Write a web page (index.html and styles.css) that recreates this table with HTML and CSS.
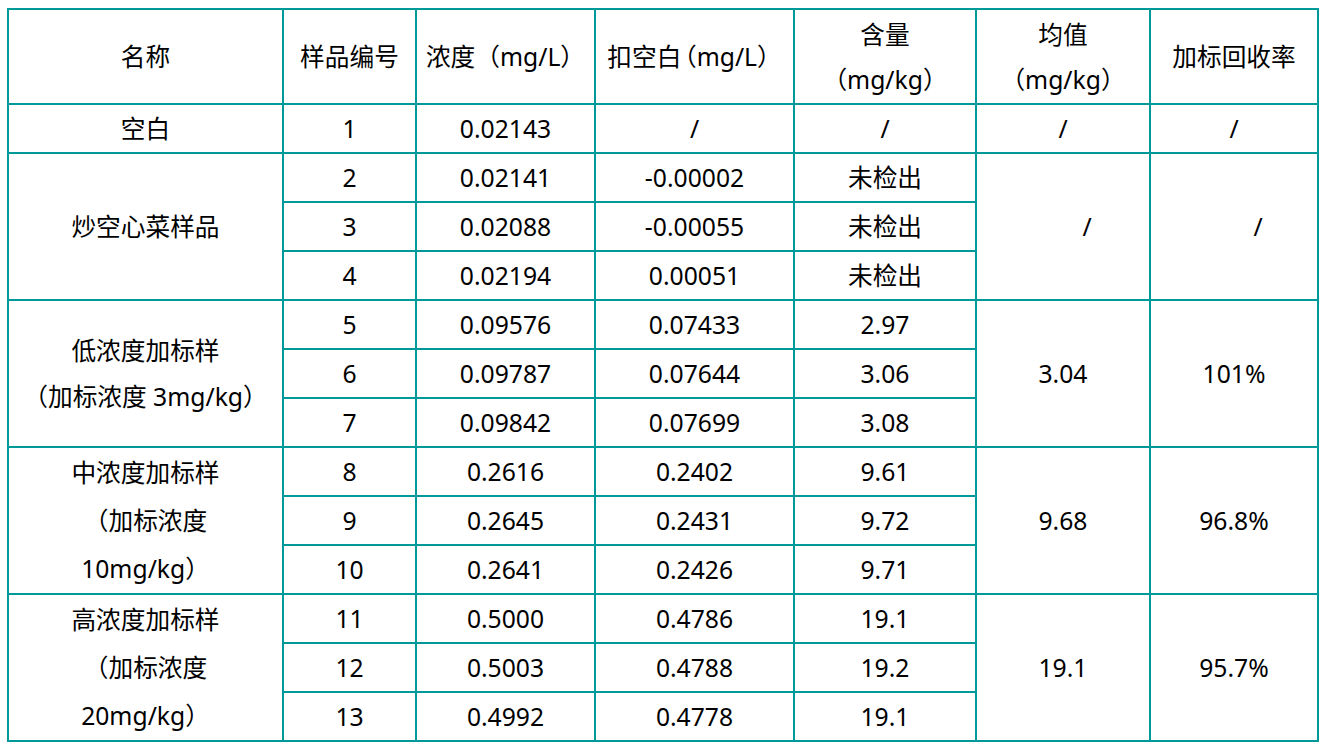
FILE: index.html
```html
<!DOCTYPE html>
<html lang="zh">
<head>
<meta charset="utf-8">
<title>加标回收率</title>
<link rel="stylesheet" href="styles.css">
</head>
<body>
<table class="data">
  <colgroup>
    <col class="c1"><col class="c2"><col class="c3"><col class="c4"><col class="c5"><col class="c6"><col class="c7">
  </colgroup>
  <thead>
    <tr class="head">
      <th>名称</th>
      <th>样品编号</th>
      <th>浓度（mg/L）</th>
      <th>扣空白<span class="tight">（</span>mg/L）</th>
      <th>含量<br>（mg/kg）</th>
      <th>均值<br>（mg/kg）</th>
      <th>加标回收率</th>
    </tr>
  </thead>
  <tbody>
    <tr>
      <td>空白</td><td>1</td><td>0.02143</td><td>/</td><td>/</td><td>/</td><td>/</td>
    </tr>
    <tr>
      <td rowspan="3">炒空心菜样品</td><td>2</td><td>0.02141</td><td>-0.00002</td><td>未检出</td>
      <td rowspan="3" class="indent">/</td><td rowspan="3" class="indent">/</td>
    </tr>
    <tr><td>3</td><td>0.02088</td><td>-0.00055</td><td>未检出</td></tr>
    <tr><td>4</td><td>0.02194</td><td>0.00051</td><td>未检出</td></tr>
    <tr>
      <td rowspan="3" class="two">低浓度加标样<br>（加标浓度 3mg/kg）</td><td>5</td><td>0.09576</td><td>0.07433</td><td>2.97</td>
      <td rowspan="3">3.04</td><td rowspan="3">101%</td>
    </tr>
    <tr><td>6</td><td>0.09787</td><td>0.07644</td><td>3.06</td></tr>
    <tr><td>7</td><td>0.09842</td><td>0.07699</td><td>3.08</td></tr>
    <tr>
      <td rowspan="3" class="three">中浓度加标样<br>（加标浓度<br>10mg/kg）</td><td>8</td><td>0.2616</td><td>0.2402</td><td>9.61</td>
      <td rowspan="3">9.68</td><td rowspan="3">96.8%</td>
    </tr>
    <tr><td>9</td><td>0.2645</td><td>0.2431</td><td>9.72</td></tr>
    <tr><td>10</td><td>0.2641</td><td>0.2426</td><td>9.71</td></tr>
    <tr>
      <td rowspan="3" class="three">高浓度加标样<br>（加标浓度<br>20mg/kg）</td><td>11</td><td>0.5000</td><td>0.4786</td><td>19.1</td>
      <td rowspan="3">19.1</td><td rowspan="3">95.7%</td>
    </tr>
    <tr><td>12</td><td>0.5003</td><td>0.4788</td><td>19.2</td></tr>
    <tr><td>13</td><td>0.4992</td><td>0.4778</td><td>19.1</td></tr>
  </tbody>
</table>
</body>
</html>
```
FILE: styles.css
```css
html, body {
  margin: 0;
  padding: 0;
  background: #ffffff;
}

body {
  padding: 8px 0 0 7px;
  font-family: "Noto Sans", "Noto Sans CJK SC", sans-serif;
  color: #000000;
}

.data {
  border-collapse: collapse;
  table-layout: fixed;
  width: 1312px;
  font-size: 24.7px;
}

.c1 { width: 275px; }
.c2 { width: 133px; }
.c3 { width: 179px; }
.c4 { width: 199px; }
.c5 { width: 182px; }
.c6 { width: 174px; }
.c7 { width: 168px; }

.data th,
.data td {
  border: 2px solid #00999a;
  padding: 0;
  text-align: center;
  vertical-align: middle;
  font-weight: normal;
  line-height: 46px;
  height: 47px;
}

.data .head th {
  height: 93px;
  line-height: 45px;
}

.data td.three {
  line-height: 48px;
}

.data td.indent {
  text-indent: 48px;
}

.tight {
  font-feature-settings: "halt" 1;
  padding-left: 3px;
}
```
